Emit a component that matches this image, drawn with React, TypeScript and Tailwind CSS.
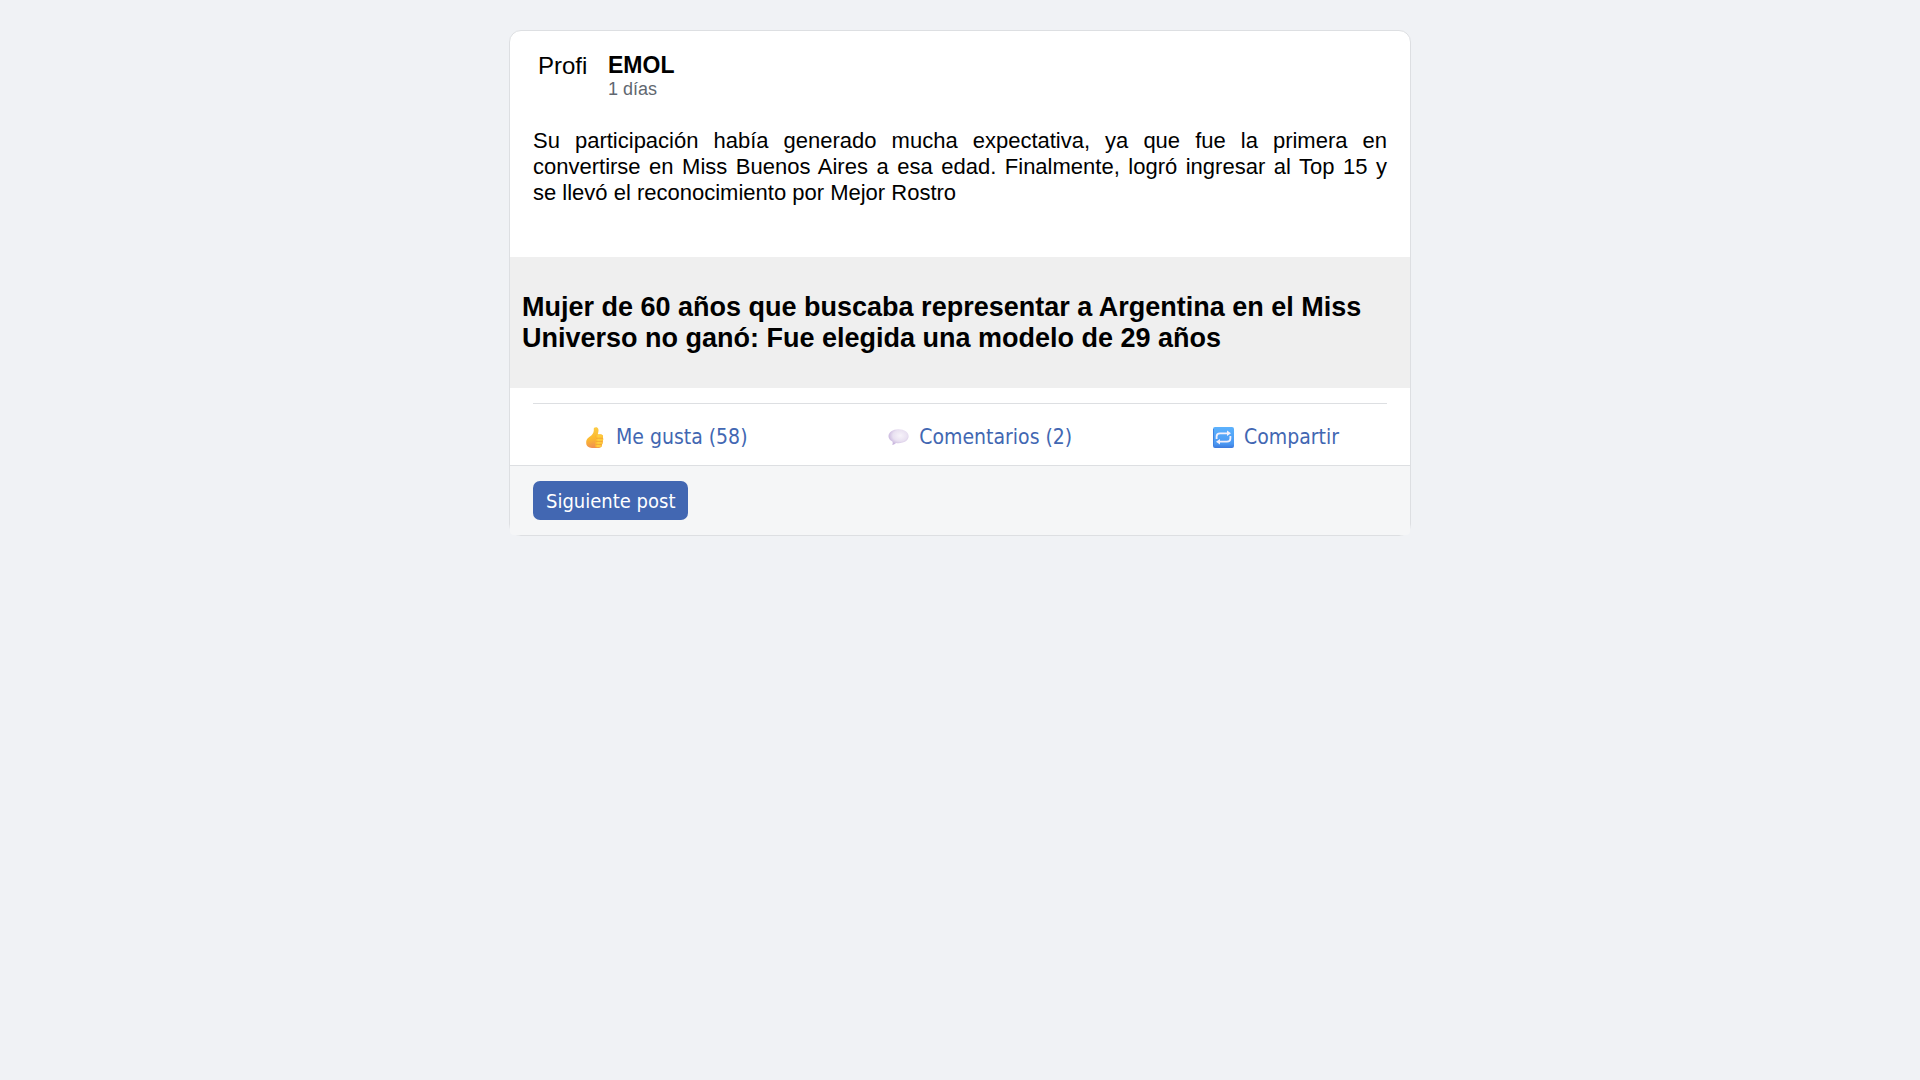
import type { ReactNode } from "react";

function ThumbIcon() {
  return (
    <svg width="21" height="21" viewBox="0 0 21 21" aria-hidden="true">
      <defs>
        <linearGradient id="thumb" x1="0" y1="0" x2="0.2" y2="1">
          <stop offset="0" stopColor="#fbd04a" />
          <stop offset="0.6" stopColor="#fcb92f" />
          <stop offset="1" stopColor="#f0914f" />
        </linearGradient>
        <linearGradient id="fingers" x1="0" y1="0" x2="1" y2="0">
          <stop offset="0" stopColor="#fbb02c" />
          <stop offset="0.4" stopColor="#ffd03d" />
          <stop offset="1" stopColor="#fdc53a" />
        </linearGradient>
      </defs>
      <path d="M9.2 0.8C10.8 -0.2 12.8 0.3 13.3 1.9C13.8 3.9 13.3 5.5 12.8 7.2H15.8C17.8 7.2 18.3 8.9 17.8 10.2C18.5 11.5 18.3 12.8 17.7 13.6C18.1 15 17.8 16 17 16.8C17.3 19 16.3 20.8 14 20.9H7C3.5 20.9 1.2 19 1.2 15.8C1.2 12.3 2.7 11.3 5 9.6C7.4 7.6 8.6 6 8.8 3.4C8.8 2.2 8.6 1.4 9.2 0.8Z" fill="url(#thumb)" />
      <rect x="10" y="8" width="8" height="3.3" rx="1.6" fill="url(#fingers)" />
      <rect x="10" y="11.2" width="8.2" height="3.2" rx="1.6" fill="url(#fingers)" />
      <rect x="10" y="14.3" width="7.8" height="3.2" rx="1.6" fill="url(#fingers)" />
      <rect x="10" y="17.3" width="6.8" height="3" rx="1.5" fill="url(#fingers)" />
      <path d="M11.2 11.2H17.6M11.2 14.4H17.4M11.2 17.4H16.6" stroke="#ec9430" strokeWidth="0.6" fill="none" />
    </svg>
  );
}

function BubbleIcon() {
  return (
    <svg width="21" height="21" viewBox="0 0 21 21" aria-hidden="true">
      <defs>
        <radialGradient id="bubble" cx="0.58" cy="0.4" r="0.6">
          <stop offset="0" stopColor="#f7f3fa" />
          <stop offset="0.6" stopColor="#e9e1f1" />
          <stop offset="1" stopColor="#c9b6de" />
        </radialGradient>
      </defs>
      <path d="M10.5 2.3C16.3 2.3 20.6 5.4 20.6 9.3C20.6 13.2 16.3 16.2 10.5 16.2C9.6 16.2 8.8 16.1 8 16C7 17.2 5.8 17.8 4.2 18C4.8 17.2 4.9 15.6 4.4 14.6C2 13.4 0.5 11.5 0.5 9.3C0.5 5.4 4.8 2.3 10.5 2.3Z" fill="url(#bubble)" />
    </svg>
  );
}

function RepeatIcon() {
  return (
    <svg width="21" height="21" viewBox="0 0 21 21" aria-hidden="true">
      <defs>
        <linearGradient id="tile" x1="0" y1="0" x2="0" y2="1">
          <stop offset="0" stopColor="#5cb2fd" />
          <stop offset="0.8" stopColor="#4b98f2" />
          <stop offset="1" stopColor="#3c78dc" />
        </linearGradient>
      </defs>
      <rect width="21" height="21" rx="2" fill="url(#tile)" />
      <path d="M0.5 2V19" stroke="#3f83e0" strokeWidth="1" />
      <g fill="none" stroke="#f3f0fb" strokeWidth="1.8">
        <path d="M3.6 12V9.5C3.6 7.3 4.8 6.3 7 6.3H15" />
        <path d="M17.4 9V11.5C17.4 13.7 16.2 14.7 14 14.7H6" />
      </g>
      <path d="M14 3.6L18 6.3L14 9ZM7 12L3 14.7L7 17.4Z" fill="#f3f0fb" />
    </svg>
  );
}

function Action({ icon, children }: { icon: ReactNode; children: ReactNode }) {
  return (
    <button type="button" className="flex cursor-pointer items-center gap-2.5 text-[#4267b2]">
      {icon}
      <span>{children}</span>
    </button>
  );
}

export default function App() {
  return (
    <div className="min-h-screen bg-[#f0f2f5] px-4 pt-[30px] font-['Liberation_Sans',Arial,sans-serif] text-black">
      <article className="mx-auto max-w-[902px] rounded-xl border border-[#dddfe2] bg-white">
        <header className="flex gap-5 px-[23px] pt-[22px]">
          <div className="w-[55px] pl-[5px] text-2xl leading-[26px]">Profi</div>
          <div>
            <h2 className="text-[23px] leading-6 font-bold">EMOL</h2>
            <p className="text-[18px] leading-6 text-[#616770]">1 días</p>
          </div>
        </header>
        <p className="px-[23px] pt-[27px] text-justify text-[22px] leading-[26px]">
          Su participación había generado mucha expectativa, ya que fue la primera en convertirse en Miss Buenos Aires a
          esa edad. Finalmente, logró ingresar al Top 15 y se&nbsp;llevó el reconocimiento por Mejor Rostro
        </p>
        <div className="mt-[51px] bg-[#efefef] px-3 pt-[35px] pb-[34px]">
          <h1 className="text-[27px] leading-[31px] font-bold">
            Mujer de 60 años que buscaba representar a Argentina en el Miss Universo no ganó: Fue elegida una modelo de
            29 años
          </h1>
        </div>
        <div className="mx-[23px] mt-[15px] flex flex-wrap justify-between border-t border-[#dddfe2] pt-[18px] pr-12 pb-3 pl-[52px] font-['DejaVu_Sans_Condensed','Noto_Sans',sans-serif] text-[21px] leading-[31px]">
          <Action icon={<ThumbIcon />}>Me gusta (58)</Action>
          <Action icon={<BubbleIcon />}>Comentarios (2)</Action>
          <Action icon={<RepeatIcon />}>Compartir</Action>
        </div>
        <footer className="rounded-b-sm border-t border-[#dddfe2] bg-[#f5f6f7] px-[23px] py-[15px] font-['DejaVu_Sans_Condensed','Noto_Sans',sans-serif] text-[20px]">
          <button type="button" className="block cursor-pointer rounded-[7px] bg-[#4267b2] px-[13px] pt-[7px] pb-[5px] leading-[27px] text-white">
            Siguiente post
          </button>
        </footer>
      </article>
    </div>
  );
}
